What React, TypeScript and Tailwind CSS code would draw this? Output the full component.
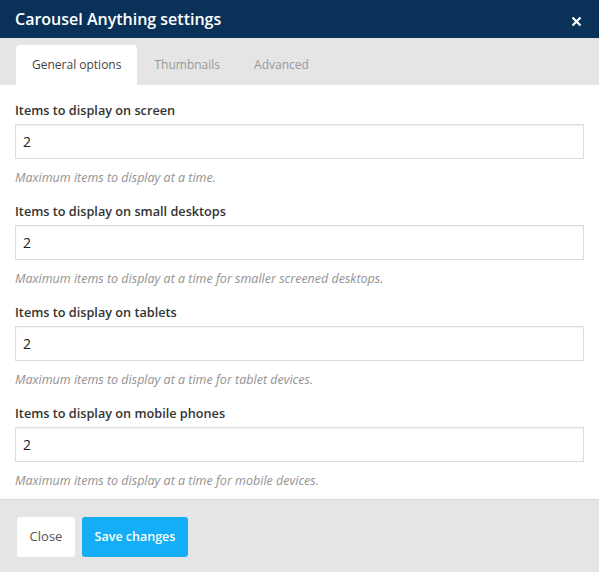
const fields = [
    { label: "Items to display on screen", hint: "Maximum items to display at a time." },
    {
        label: "Items to display on small desktops",
        hint: "Maximum items to display at a time for smaller screened desktops.",
    },
    { label: "Items to display on tablets", hint: "Maximum items to display at a time for tablet devices." },
    {
        label: "Items to display on mobile phones",
        hint: "Maximum items to display at a time for mobile devices.",
    },
];

const tabs = ["General options", "Thumbnails", "Advanced"];

const App = () => {
    return (
        <div
            className="w-[599px] h-[572px] bg-white flex flex-col overflow-hidden"
            style={{ fontFamily: '"Open Sans", "Noto Sans", sans-serif' }}
        >
            <div className="h-[38px] shrink-0 bg-[#0a3158] flex items-center justify-between pl-[15px] pr-[17px]">
                <h1 className="text-[16px] font-semibold text-white leading-none">Carousel Anything settings</h1>
                <svg width="11" height="11" viewBox="0 0 11 11" className="mt-[5px]">
                    <path d="M1.5 1.5 L9.5 9.5 M9.5 1.5 L1.5 9.5" stroke="white" strokeWidth="2.2" />
                </svg>
            </div>

            <div className="h-[47px] shrink-0 bg-[#e5e5e5] flex items-end pl-[16px]">
                {tabs.map((tab, index) => (
                    <div
                        key={tab}
                        className={
                            index === 0
                                ? "h-[40px] px-[16px] bg-white rounded-t-[4px] flex items-center text-[12px] text-[#444444]"
                                : "h-[40px] px-[17px] flex items-center text-[12px] text-[#999999]"
                        }
                    >
                        {tab}
                    </div>
                ))}
            </div>

            <div className="flex-1 min-h-0 px-[15px] pt-[16px]">
                {fields.map((field) => (
                    <div key={field.label} className="mb-[15px] last:mb-0">
                        <label className="block text-[12.7px] font-semibold text-[#333333] leading-[18px] mb-[5px]">
                            {field.label}
                        </label>
                        <div className="h-[35px] border border-[#dddddd] bg-white flex items-center px-[7px] text-[14px] text-[#222222] shadow-[inset_0_1px_2px_rgba(0,0,0,0.06)]">
                            2
                        </div>
                        <p className="mt-[10px] text-[12.5px] italic text-[#929292] leading-[18px]">{field.hint}</p>
                    </div>
                ))}
            </div>

            <div className="h-[73px] shrink-0 bg-[#e5e5e5] border-t border-[#d9d9d9] flex items-center gap-[7px] pl-[17px] pt-[2px]">
                <button className="h-[40px] w-[58px] bg-white rounded-[3px] text-[13px] text-[#555555]">Close</button>
                <button className="h-[40px] w-[106px] bg-[#13aef5] rounded-[3px] text-[12.5px] font-semibold text-white">
                    Save changes
                </button>
            </div>
        </div>
    );
};

export default App;
